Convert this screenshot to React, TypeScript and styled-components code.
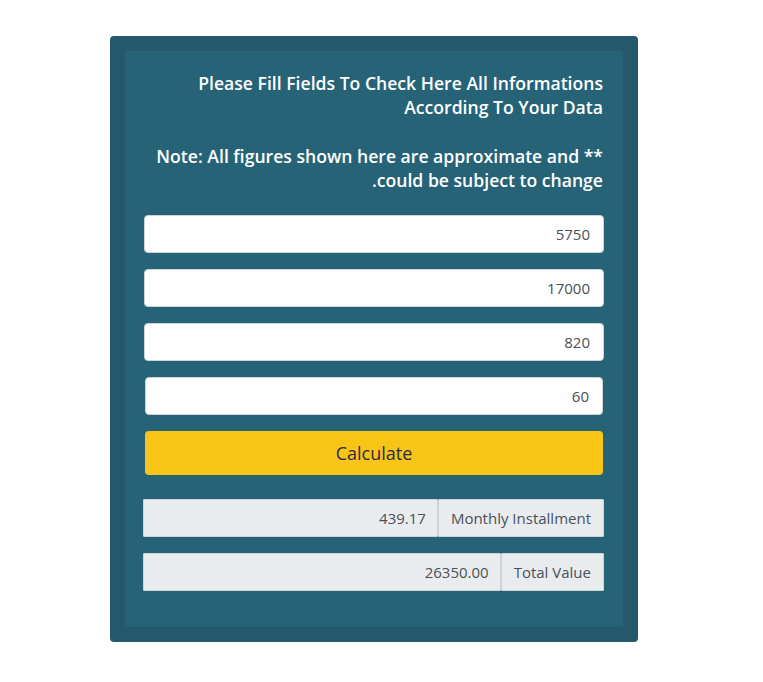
import React from 'react';
import styled, { createGlobalStyle } from 'styled-components';

const GlobalStyle = createGlobalStyle`
  body {
    margin: 0;
    background: #ffffff;
    font-family: "Open Sans", "Noto Sans", sans-serif;
  }
  * {
    box-sizing: border-box;
  }
`;

const Frame = styled.div`
  width: 528px;
  margin: 36px 0 0 110px;
  padding: 15px;
  background: #23596a;
  border-radius: 4px;
`;

const Panel = styled.div`
  display: flex;
  flex-direction: column;
  padding: 20px 19px 36px;
  background: #266377;
`;

const Intro = styled.p`
  margin: 0 1px 0 0;
  font-size: 17.6px;
  font-weight: 600;
  line-height: 24px;
  color: #ffffff;
  text-align: right;

  & + & {
    margin-top: 25px;
  }
`;

const Fields = styled.div`
  display: flex;
  flex-direction: column;
  gap: 16px;
  margin-top: 23px;
`;

const Field = styled.input<{ $inset?: boolean }>`
  height: 38px;
  width: ${({ $inset }) => ($inset ? 'calc(100% - 2px)' : '100%')};
  margin: 0 ${({ $inset }) => ($inset ? '1px' : '0')};
  padding: 0 13px;
  border: 1px solid #ced4da;
  border-radius: 4px;
  background: #ffffff;
  color: #495057;
  font-family: inherit;
  font-size: 15px;
  text-align: right;
  outline: none;
`;

const CalcButton = styled.button`
  height: 44px;
  margin: 0 1px;
  border: none;
  border-radius: 4px;
  background: #f8c517;
  color: #2b2b4d;
  font-family: inherit;
  font-size: 18px;
  cursor: pointer;
`;

const Results = styled.div`
  display: flex;
  flex-direction: column;
  gap: 16px;
  margin-top: 24px;
`;

const ResultRow = styled.div`
  display: flex;
  height: 38px;
  margin-left: -1px;
`;

const Cell = styled.div`
  display: flex;
  align-items: center;
  border: 1px solid #ced4da;
  border-radius: 1px;
  background: #e9ecef;
  color: #495057;
  font-size: 15px;
`;

const ResultValue = styled(Cell)`
  flex: 1;
  justify-content: flex-end;
  padding: 0 11px;
`;

const ResultLabel = styled(Cell)`
  padding: 0 12px;
  white-space: nowrap;
`;

const fields = ['5750', '17000', '820', '60'];

const results = [
  { value: '439.17', label: 'Monthly Installment' },
  { value: '26350.00', label: 'Total Value' },
];

const App: React.FC = () => {
  return (
    <>
      <GlobalStyle />
      <Frame>
        <Panel>
          <Intro>
            Please Fill Fields To Check Here All Informations
            <br />
            According To Your Data
          </Intro>
          <Intro>
            Note: All figures shown here are approximate and **
            <br />
            .could be subject to change
          </Intro>
          <Fields>
            {fields.map((v, i) => (
              <Field key={i} defaultValue={v} $inset={i === 3} />
            ))}
            <CalcButton type="button">Calculate</CalcButton>
          </Fields>
          <Results>
            {results.map((r) => (
              <ResultRow key={r.label}>
                <ResultValue>{r.value}</ResultValue>
                <ResultLabel>{r.label}</ResultLabel>
              </ResultRow>
            ))}
          </Results>
        </Panel>
      </Frame>
    </>
  );
};

export default App;
